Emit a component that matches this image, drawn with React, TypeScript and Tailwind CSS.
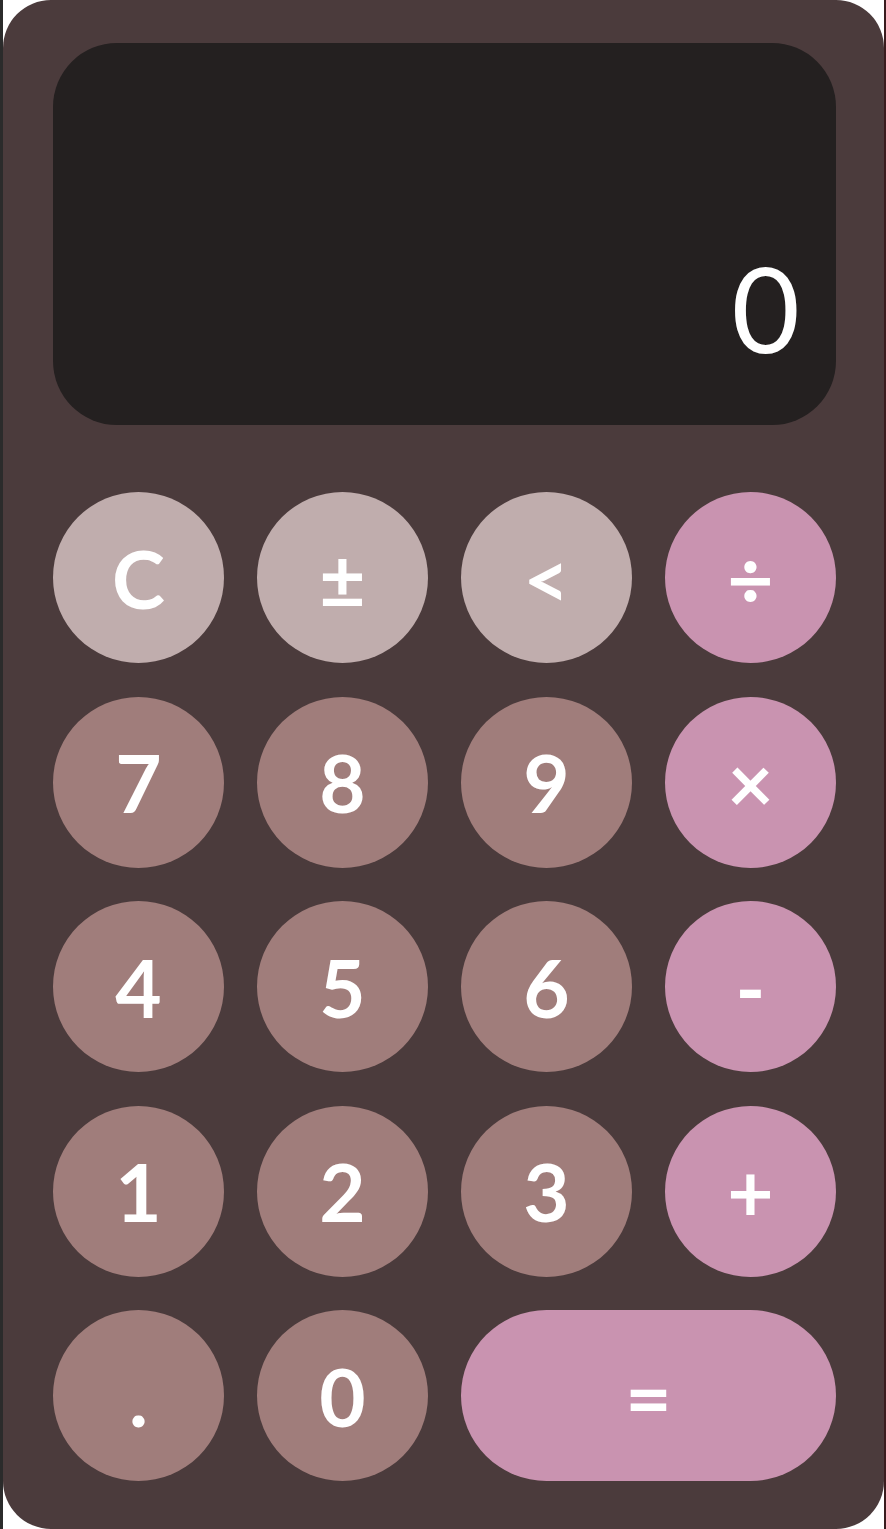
const KEYS: { label: string; kind: 'fn' | 'num' | 'op'; wide?: boolean }[] = [
  { label: 'C', kind: 'fn' },
  { label: '±', kind: 'fn' },
  { label: '<', kind: 'fn' },
  { label: '÷', kind: 'op' },
  { label: '7', kind: 'num' },
  { label: '8', kind: 'num' },
  { label: '9', kind: 'num' },
  { label: '×', kind: 'op' },
  { label: '4', kind: 'num' },
  { label: '5', kind: 'num' },
  { label: '6', kind: 'num' },
  { label: '-', kind: 'op' },
  { label: '1', kind: 'num' },
  { label: '2', kind: 'num' },
  { label: '3', kind: 'num' },
  { label: '+', kind: 'op' },
  { label: '.', kind: 'num' },
  { label: '0', kind: 'num' },
  { label: '=', kind: 'op', wide: true },
]

const KIND_BG = {
  fn: 'bg-[#c0adad]',
  num: 'bg-[#a07d7b]',
  op: 'bg-[#c993b0]',
}

export default function App() {
  return (
    <div className="flex h-[1529px] w-[886px] bg-white font-['Lato','Noto_Sans',sans-serif]">
      <div className="w-[3px] bg-[#2b2b2b]" />
      <div className="flex h-full w-[881px] flex-col rounded-[48px] bg-[#4b3b3c] pt-[43px] pr-[48px] pl-[50px]">
        <div className="flex h-[382px] items-end justify-end rounded-[64px] bg-[#242020] pr-[36px] pb-[58px]">
          <span className="text-[118px] leading-none font-normal text-white">0</span>
        </div>
        <div className="mt-[67px] grid grid-cols-[repeat(4,171px)] gap-x-[33px] gap-y-[33.5px]">
          {KEYS.map((k) => (
            <button
              key={k.label}
              type="button"
              className={`flex h-[171px] items-center justify-center rounded-full text-[80px] leading-none font-bold text-white ${
                KIND_BG[k.kind]
              } ${k.wide ? 'col-span-2' : ''}`}
            >
              {k.label}
            </button>
          ))}
        </div>
      </div>
      <div className="w-[2px] bg-[#3a1c1e]" />
    </div>
  )
}
